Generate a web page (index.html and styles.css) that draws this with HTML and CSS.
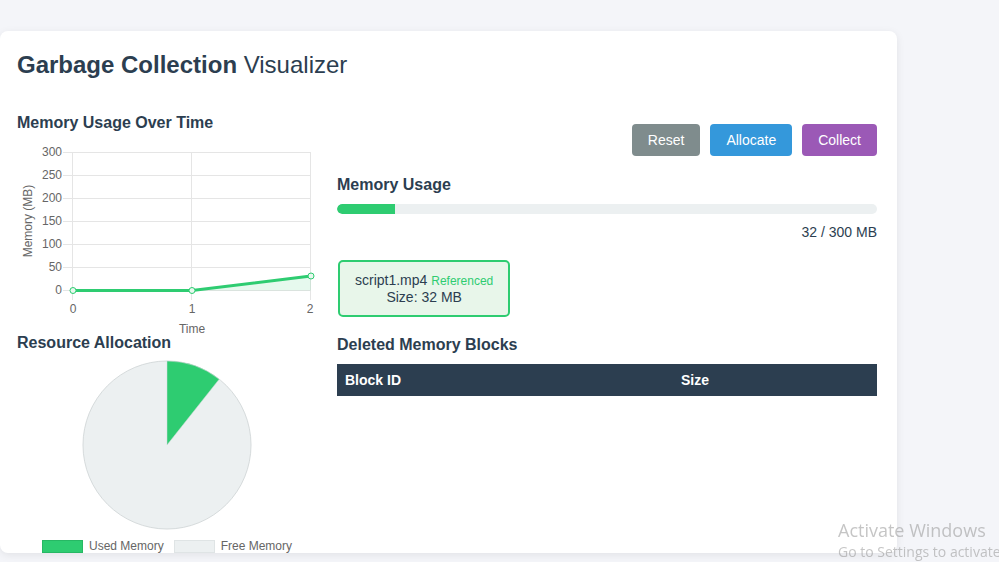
FILE: index.html
```html
<!DOCTYPE html>
<html lang="en">
<head>
<meta charset="utf-8">
<title>Garbage Collection Visualizer</title>
<link rel="stylesheet" href="styles.css">
</head>
<body>
<div class="card">
  <h1 class="title"><strong>Garbage Collection</strong> Visualizer</h1>
  <div class="layout">
    <div class="left">
      <h3 class="heading first">Memory Usage Over Time</h3>
      <svg class="line-chart" width="300" height="199" viewBox="0 0 300 199">
        <g stroke="#e5e5e5" stroke-width="1">
          <line x1="46" y1="16.5" x2="294" y2="16.5"/>
          <line x1="46" y1="39.5" x2="294" y2="39.5"/>
          <line x1="46" y1="62.5" x2="294" y2="62.5"/>
          <line x1="46" y1="85.5" x2="294" y2="85.5"/>
          <line x1="46" y1="108.5" x2="294" y2="108.5"/>
          <line x1="46" y1="131.5" x2="294" y2="131.5"/>
          <line x1="46" y1="154.5" x2="294" y2="154.5"/>
          <line x1="55.5" y1="16" x2="55.5" y2="164"/>
          <line x1="174.5" y1="16" x2="174.5" y2="164"/>
          <line x1="293.5" y1="16" x2="293.5" y2="164"/>
        </g>
        <g class="tick" text-anchor="end">
          <text x="45" y="20">300</text>
          <text x="45" y="43">250</text>
          <text x="45" y="66">200</text>
          <text x="45" y="89">150</text>
          <text x="45" y="112">100</text>
          <text x="45" y="135">50</text>
          <text x="45" y="158">0</text>
        </g>
        <g class="tick" text-anchor="middle">
          <text x="56" y="177">0</text>
          <text x="175" y="177">1</text>
          <text x="293" y="177">2</text>
          <text x="175" y="197" class="axis-title">Time</text>
        </g>
        <text class="tick" text-anchor="middle" transform="translate(15 85) rotate(-90)">Memory (MB)</text>
        <polygon points="56,154.5 175,154.5 294,140 294,154.5" fill="rgba(46,204,113,0.12)"/>
        <polyline points="56,154.5 175,154.5 294,140" fill="none" stroke="#2ecc71" stroke-width="3" stroke-linejoin="round"/>
        <g fill="#e8f8ef" stroke="#2ecc71" stroke-width="1">
          <circle cx="56" cy="154.5" r="3"/>
          <circle cx="175" cy="154.5" r="3"/>
          <circle cx="294" cy="140" r="3"/>
        </g>
      </svg>
      <h3 class="heading second">Resource Allocation</h3>
      <svg class="pie" width="300" height="186" viewBox="0 0 300 186">
        <circle cx="150" cy="93" r="84" fill="#ecf0f1" stroke="#d6dbdc" stroke-width="1"/>
        <path d="M150 93 L150 9 A84 84 0 0 1 202.2 27.2 Z" fill="#2ecc71" stroke="#d6dbdc" stroke-width="0.5"/>
      </svg>
      <div class="legend">
        <span class="swatch used"></span><span class="legend-label">Used Memory</span>
        <span class="swatch free"></span><span class="legend-label">Free Memory</span>
      </div>
    </div>
    <div class="right">
      <div class="controls">
        <button class="btn reset">Reset</button>
        <button class="btn allocate">Allocate</button>
        <button class="btn collect">Collect</button>
      </div>
      <h3 class="heading usage-heading">Memory Usage</h3>
      <div class="progress"><div class="progress-fill" style="width: 10.67%"></div></div>
      <div class="usage-text">32 / 300 MB</div>
      <div class="blocks">
        <div class="block">
          <div>script1.mp4 <span class="status">Referenced</span></div>
          <div>Size: 32 MB</div>
        </div>
      </div>
      <h3 class="heading deleted-heading">Deleted Memory Blocks</h3>
      <table class="deleted">
        <thead>
          <tr><th class="col-id">Block ID</th><th>Size</th></tr>
        </thead>
        <tbody></tbody>
      </table>
    </div>
  </div>
</div>
<div class="watermark">
  <div class="wm-title">Activate Windows</div>
  <div class="wm-sub">Go to Settings to activate Windows.</div>
</div>
</body>
</html>
```

FILE: styles.css
```css
html, body {
  margin: 0;
  padding: 0;
}
body {
  background: #f4f5f9;
  font-family: "Liberation Sans", Arial, sans-serif;
  color: #2c3e50;
  height: 562px;
  overflow: hidden;
}
.card {
  margin-top: 31px;
  width: 860px;
  height: 502px;
  padding: 20px 20px 0 17px;
  background: #fff;
  border-radius: 8px;
  box-shadow: 0 2px 8px rgba(0, 0, 0, 0.08);
}
.title {
  margin: 0;
  font-size: 24px;
  line-height: 28px;
  font-weight: normal;
  color: #2c3e50;
}
.title strong {
  font-weight: bold;
}
.layout {
  display: grid;
  grid-template-columns: 300px 1fr;
  column-gap: 20px;
  margin-top: 21px;
}
.heading {
  margin: 0;
  font-size: 16px;
  line-height: 18px;
  font-weight: bold;
  color: #2c3e50;
}
.heading.first {
  margin-top: 14px;
}
.heading.second {
  margin-top: -1px;
}
.line-chart {
  display: block;
  margin-top: 4px;
}
.tick {
  font-family: "Liberation Sans", Arial, sans-serif;
  font-size: 12px;
  fill: #666;
}
.pie {
  display: block;
}
.legend {
  display: flex;
  align-items: center;
  margin-left: 25px;
  margin-top: 1px;
  font-size: 12px;
  color: #666;
}
.swatch {
  width: 39px;
  height: 11px;
  border: 1px solid;
  margin-right: 6px;
}
.swatch.used {
  background: #2ecc71;
  border-color: #27b864;
}
.swatch.free {
  background: #ecf0f1;
  border-color: #dfe4e5;
}
.legend-label {
  margin-right: 10px;
}
.controls {
  display: flex;
  justify-content: flex-end;
  gap: 10px;
  margin-top: 24px;
}
.btn {
  height: 32px;
  padding: 0 16px;
  border: none;
  border-radius: 4px;
  color: #fff;
  font-family: "Liberation Sans", Arial, sans-serif;
  font-size: 14px;
}
.btn.reset { background: #7f8c8d; }
.btn.allocate { background: #3498db; }
.btn.collect { background: #9b59b6; }
.usage-heading {
  margin-top: 20px;
}
.progress {
  margin-top: 10px;
  height: 10px;
  background: #ecf0f1;
  border-radius: 5px;
  overflow: hidden;
}
.progress-fill {
  height: 100%;
  background: #2ecc71;
  border-radius: 5px 0 0 5px;
}
.usage-text {
  margin-top: 10px;
  text-align: right;
  font-size: 14px;
  line-height: 16px;
  color: #2c3e50;
}
.blocks {
  margin-top: 20px;
  display: flex;
  padding-left: 1px;
}
.block {
  padding: 10px 15px;
  border: 2px solid #2ecc71;
  border-radius: 5px;
  background: #e8f6ea;
  text-align: center;
  font-size: 14px;
  line-height: 16px;
  color: #2c3e50;
}
.status {
  font-size: 12px;
  color: #2ecc71;
}
.deleted-heading {
  margin-top: 19px;
}
.deleted {
  margin-top: 10px;
  width: 100%;
  border-collapse: collapse;
}
.deleted th {
  background: #2c3e50;
  color: #fff;
  text-align: left;
  font-size: 14px;
  line-height: 16px;
  padding: 8px;
}
.deleted th.col-id {
  width: 320px;
}
.watermark {
  position: fixed;
  left: 838px;
  top: 518px;
  color: rgba(150, 150, 150, 0.55);
  font-family: "Open Sans", "Noto Sans", sans-serif;
  white-space: nowrap;
}
.wm-title {
  font-size: 18px;
  line-height: 24px;
}
.wm-sub {
  font-size: 14px;
  line-height: 20px;
}
```
